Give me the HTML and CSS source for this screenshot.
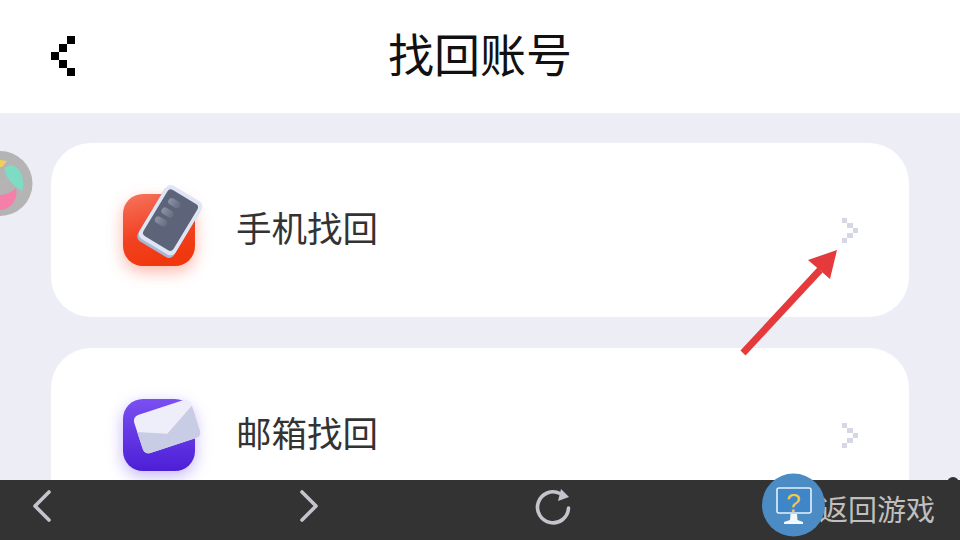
FILE: index.html
```html
<!DOCTYPE html>
<html lang="zh-CN">
<head>
    <meta charset="UTF-8">
    <meta name="viewport" content="width=device-width, initial-scale=1.0">
    <title>找回账号</title>
    <link rel="stylesheet" href="styles.css">
</head>
<body>
    <div class="screen">
        <header class="top-bar">
            <svg class="back-icon" viewBox="0 0 24 40" width="24" height="40">
                <rect x="16" y="0" width="8" height="8"/>
                <rect x="8" y="8" width="8" height="8"/>
                <rect x="0" y="16" width="8" height="8"/>
                <rect x="8" y="24" width="8" height="8"/>
                <rect x="16" y="32" width="8" height="8"/>
            </svg>
            <h1 class="page-title">找回账号</h1>
        </header>

        <main class="list">
            <div class="card">
                <svg class="card-icon" viewBox="0 0 72 72" width="72" height="72">
                    <defs>
                        <linearGradient id="redBg" x1="0" y1="0" x2="0.3" y2="1">
                            <stop offset="0" stop-color="#f5755f"/>
                            <stop offset="0.6" stop-color="#f24222"/>
                            <stop offset="1" stop-color="#f0380f"/>
                        </linearGradient>
                        <linearGradient id="barFade" x1="0" y1="0" x2="1" y2="0">
                            <stop offset="0" stop-color="#8d93a5"/>
                            <stop offset="1" stop-color="#666d82"/>
                        </linearGradient>
                    </defs>
                    <rect class="red-tile" width="72" height="72" rx="20" fill="url(#redBg)"/>
                    <g transform="translate(47 27) rotate(31)">
                        <rect x="-21" y="-30" width="42" height="63" rx="6" fill="#a6b8d6"/>
                        <rect x="-21" y="-32" width="42" height="62" rx="6" fill="#dfe5f4"/>
                        <rect x="-17.5" y="-28" width="35" height="54" rx="4" fill="#5d6479"/>
                        <rect x="-12" y="-21" width="13" height="7" rx="3.5" fill="url(#barFade)"/>
                        <rect x="-13" y="-9.5" width="13" height="7" rx="3.5" fill="url(#barFade)"/>
                        <rect x="-14" y="1.5" width="13" height="7" rx="3.5" fill="url(#barFade)"/>
                    </g>
                </svg>
                <span class="card-label">手机找回</span>
                <svg class="more-icon" viewBox="0 0 16 25" width="16" height="25">
                    <rect x="0" y="0" width="5" height="5"/>
                    <rect x="5" y="5" width="6" height="5"/>
                    <rect x="11" y="10" width="5" height="5"/>
                    <rect x="5" y="15" width="6" height="5"/>
                    <rect x="0" y="20" width="5" height="5"/>
                </svg>
            </div>
            <div class="card">
                <svg class="card-icon mail" viewBox="0 0 72 72" width="72" height="72">
                    <defs>
                        <linearGradient id="purpleBg" x1="0" y1="0" x2="0" y2="1">
                            <stop offset="0" stop-color="#7a50f2"/>
                            <stop offset="1" stop-color="#4c1fd6"/>
                        </linearGradient>
                    </defs>
                    <rect class="purple-tile" width="72" height="72" rx="20" fill="url(#purpleBg)"/>
                    <g transform="translate(44 27.5) rotate(-18)">
                        <rect x="-30" y="-20" width="60" height="40" rx="6" fill="#eeeefb"/>
                        <path d="M-30 -4 L-2 7 L30 -12 L30 14 Q30 20 24 20 L-24 20 Q-30 20 -30 14 Z" fill="#c9cce5"/>
                    </g>
                </svg>
                <span class="card-label">邮箱找回</span>
                <svg class="more-icon" viewBox="0 0 16 25" width="16" height="25">
                    <rect x="0" y="0" width="5" height="5"/>
                    <rect x="5" y="5" width="6" height="5"/>
                    <rect x="11" y="10" width="5" height="5"/>
                    <rect x="5" y="15" width="6" height="5"/>
                    <rect x="0" y="20" width="5" height="5"/>
                </svg>
            </div>
        </main>

        <footer class="tool-bar">
            <svg class="tool-icon" viewBox="0 0 18 32" width="18" height="32">
                <path d="M16 2 L2 16 L16 30"/>
            </svg>
            <svg class="tool-icon forward" viewBox="0 0 18 32" width="18" height="32">
                <path d="M2 2 L16 16 L2 30"/>
            </svg>
            <svg class="tool-icon refresh" viewBox="0 0 34 34" width="34" height="34">
                <path d="M24 3.5 A15.5 15.5 0 1 0 32.5 18"/>
                <path class="refresh-head" d="M25 -1 L33 7 L22 11 Z"/>
            </svg>
            <span class="back-game">返回游戏</span>
        </footer>

        <!-- 悬浮层 -->
        <svg class="float-ball" viewBox="0 0 33 65" width="33" height="65">
            <circle cx="0" cy="32.5" r="32.5" fill="#b4b4b4"/>
            <path d="M5 17 C10 11 19 15 22 25 C24 32 23 38 22 40 C15 36 4 26 5 17 Z" fill="#7fdcc4"/>
            <path d="M0 44 C6 44 12 41 16 37 C18 45 14 54 7 57 C4 59 2 59 0 59 Z" fill="#f57fa8"/>
            <path d="M0 9 L7 10 L2 16 L0 16 Z" fill="#f2cf57"/>
        </svg>

        <svg class="arrow" viewBox="0 0 100 110" width="100" height="110">
            <path d="M3 103 L80 20" stroke="#e53a3b" stroke-width="7" fill="none"/>
            <path d="M97 0 L68 10 L90 29 Z" fill="#e53a3b"/>
        </svg>

        <svg class="help-ball" viewBox="0 0 64 64" width="64" height="64">
            <circle cx="31.5" cy="32" r="31.5" fill="#4b8cc5"/>
            <rect x="15" y="15" width="34" height="25" rx="2" fill="#3f86c8" stroke="#e4f2fb" stroke-width="1.6"/>
            <text x="31.5" y="39" text-anchor="middle" class="help-mark">?</text>
            <path d="M28.5 41 L35 41 L35.5 47 L41 49 L41 51 L22 51 L22 49 L28 47 Z" fill="#f3f8fc"/>
        </svg>

        <div class="corner-dot"></div>
    </div>
</body>
</html>
```

FILE: styles.css
```css
* {
    box-sizing: border-box;
}
html, body {
    margin: 0;
    padding: 0;
}
body {
    font-family: "Noto Sans CJK SC", "Noto Sans", sans-serif;
}
.screen {
    position: relative;
    width: 960px;
    height: 540px;
    overflow: hidden;
    display: flex;
    flex-direction: column;
    background-color: #ecedf5;
}
.top-bar {
    height: 113px;
    flex: none;
    display: grid;
    grid-template-columns: 1fr auto 1fr;
    align-items: center;
    padding: 0 51px;
    background-color: #fff;
}
.back-icon {
    fill: #000;
    margin-top: -2px;
}
.page-title {
    margin: 0;
    font-size: 46px;
    font-weight: 400;
    line-height: 60px;
    color: #111;
    margin-top: -9px;
}
.list {
    flex: 1;
    min-height: 0;
    padding: 30px 51px 0;
    display: flex;
    flex-direction: column;
    gap: 31px;
    overflow: hidden;
}
.card {
    flex: none;
    height: 174px;
    display: flex;
    align-items: center;
    padding: 0 51px 0 72px;
    background-color: #fff;
    border-radius: 40px;
}
.card-icon {
    flex: none;
    overflow: visible;
    margin-right: 41px;
}
.card-icon.mail {
    margin-top: -1px;
}
.red-tile {
    filter: drop-shadow(0 6px 8px rgba(244, 70, 40, 0.38));
}
.purple-tile {
    filter: drop-shadow(0 5px 8px rgba(110, 70, 240, 0.4));
}
.card-label {
    font-size: 35.5px;
    line-height: 50px;
    color: #333;
    margin-top: -7px;
}
.more-icon {
    margin-left: auto;
    fill: #d5d7e4;
}
.tool-bar {
    height: 60px;
    flex: none;
    display: flex;
    align-items: center;
    padding: 0 25px 0 33px;
    background-color: #333;
}
.tool-icon {
    flex: none;
    overflow: visible;
    fill: none;
    stroke: #c4c5cc;
    stroke-width: 3.6;
    stroke-linecap: round;
    stroke-linejoin: round;
    margin-top: -9px;
}
.tool-icon.forward {
    margin-left: 249px;
}
.tool-icon.refresh {
    margin-left: 218px;
    margin-top: -6px;
}
.refresh-head {
    fill: #c4c5cc;
    stroke: none;
}
.back-game {
    margin-left: auto;
    font-size: 29px;
    line-height: 40px;
    color: #bfbfbf;
    margin-top: -5px;
}
.float-ball {
    position: absolute;
    left: 0;
    top: 151px;
}
.arrow {
    position: absolute;
    left: 740px;
    top: 250px;
}
.help-ball {
    position: absolute;
    left: 762px;
    top: 473px;
}
.help-mark {
    font-family: "Liberation Sans", sans-serif;
    font-size: 26px;
    fill: #f2c94c;
}
.corner-dot {
    position: absolute;
    left: 947px;
    top: 477px;
    width: 12px;
    height: 12px;
    border-radius: 50%;
    background-color: #333;
}
```
